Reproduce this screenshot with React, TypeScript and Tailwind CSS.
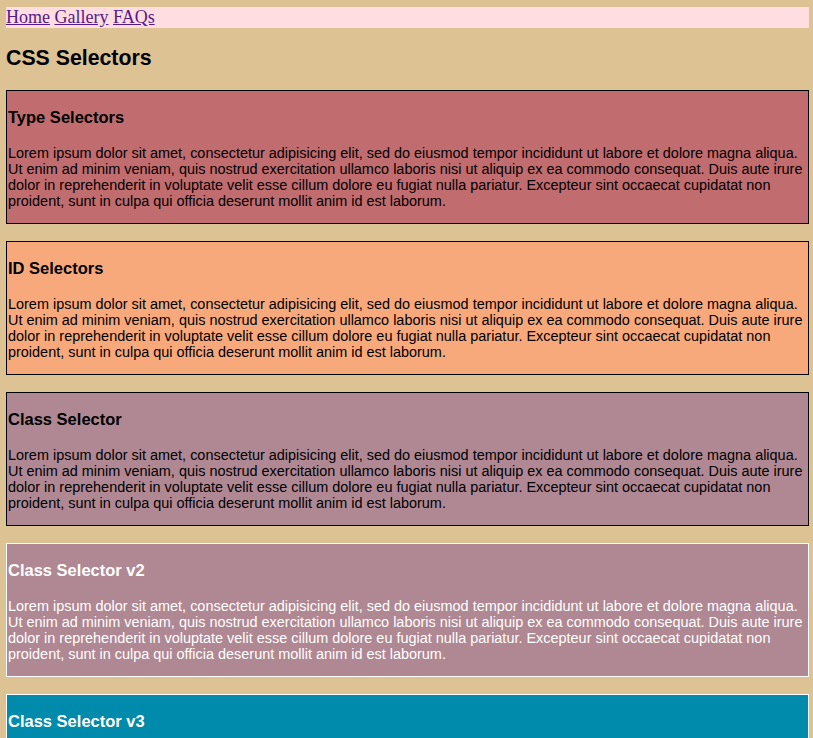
const lorem =
  "Lorem ipsum dolor sit amet, consectetur adipisicing elit, sed do eiusmod tempor incididunt ut labore et dolore magna aliqua. Ut enim ad minim veniam, quis nostrud exercitation ullamco laboris nisi ut aliquip ex ea commodo consequat. Duis aute irure dolor in reprehenderit in voluptate velit esse cillum dolore eu fugiat nulla pariatur. Excepteur sint occaecat cupidatat non proident, sunt in culpa qui officia deserunt mollit anim id est laborum.";

const sections = [
  { title: "Type Selectors", box: "bg-[#c16c6e] border-black text-black" },
  { title: "ID Selectors", box: "bg-[#f7a97b] border-black text-black" },
  { title: "Class Selector", box: "bg-[#af8893] border-black text-black" },
  { title: "Class Selector v2", box: "bg-[#af8893] border-white text-white" },
  { title: "Class Selector v3", box: "bg-[#008aab] border-white text-white" },
];

export default function App() {
  return (
    <div className="min-h-[738px] bg-[#ddc294] pl-[6px] pt-[7px] font-['Liberation_Sans',Arial,sans-serif] text-black">
      <div className="w-[803px]">
        {/* nav */}
        <nav className="bg-[#ffdde0] font-['Liberation_Serif','Times_New_Roman',serif] text-[18px] leading-[21px]">
          <a href="#" className="text-[#551a8b] underline">Home</a>{" "}
          <a href="#" className="text-[#551a8b] underline">Gallery</a>{" "}
          <a href="#" className="text-[#551a8b] underline">FAQs</a>
        </nav>

        <h1 className="mt-[18px] mb-[20px] text-[21.3px] leading-[24px] font-bold">CSS Selectors</h1>

        <div className="flex flex-col gap-[17px]">
          {sections.map((s) => (
            <section key={s.title} className={`border pl-px ${s.box}`}>
              <h4 className="mt-[17px] text-[16.5px] leading-[18px] font-bold">{s.title}</h4>
              <p className="mt-[19px] mb-[14px] text-[14.45px] leading-[16px]">{lorem}</p>
            </section>
          ))}
        </div>
      </div>
    </div>
  );
}
